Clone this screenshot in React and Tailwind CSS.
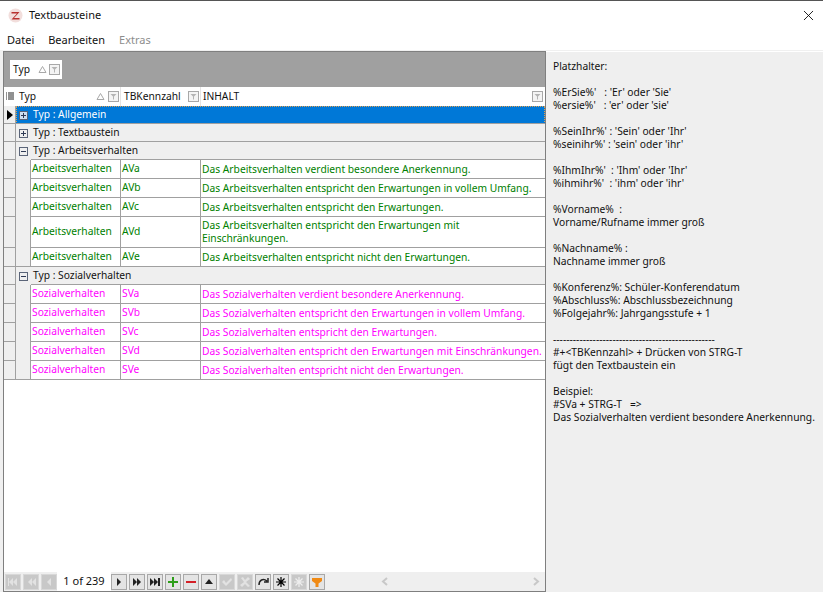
import React from 'react';
import { X } from 'lucide-react';

const arbeit = [
  ['Arbeitsverhalten', 'AVa', 'Das Arbeitsverhalten verdient besondere Anerkennung.'],
  ['Arbeitsverhalten', 'AVb', 'Das Arbeitsverhalten entspricht den Erwartungen in vollem Umfang.'],
  ['Arbeitsverhalten', 'AVc', 'Das Arbeitsverhalten entspricht den Erwartungen.'],
  ['Arbeitsverhalten', 'AVd', 'Das Arbeitsverhalten entspricht den Erwartungen mit Einschränkungen.', true],
  ['Arbeitsverhalten', 'AVe', 'Das Arbeitsverhalten entspricht nicht den Erwartungen.'],
];

const sozial = [
  ['Sozialverhalten', 'SVa', 'Das Sozialverhalten verdient besondere Anerkennung.'],
  ['Sozialverhalten', 'SVb', 'Das Sozialverhalten entspricht den Erwartungen in vollem Umfang.'],
  ['Sozialverhalten', 'SVc', 'Das Sozialverhalten entspricht den Erwartungen.'],
  ['Sozialverhalten', 'SVd', 'Das Sozialverhalten entspricht den Erwartungen mit Einschränkungen.'],
  ['Sozialverhalten', 'SVe', 'Das Sozialverhalten entspricht nicht den Erwartungen.'],
];

const help = [
  'Platzhalter:', '',
  "%ErSie%'   : 'Er' oder 'Sie'", "%ersie%'   : 'er' oder 'sie'", '',
  "%SeinIhr%' : 'Sein' oder 'Ihr'", "%seinihr%' : 'sein' oder 'ihr'", '',
  "%IhmIhr%'  : 'Ihm' oder 'Ihr'", "%ihmihr%'  : 'ihm' oder 'ihr'", '',
  '%Vorname%  :', 'Vorname/Rufname immer groß', '',
  '%Nachname% :', 'Nachname immer groß', '',
  '%Konferenz%: Schüler-Konferendatum', '%Abschluss%: Abschlussbezeichnung', '%Folgejahr%: Jahrgangsstufe + 1', '',
  '-------------------------------------------------',
  '#+<TBKennzahl> + Drücken von STRG-T', 'fügt den Textbaustein ein', '',
  'Beispiel:', '#SVa + STRG-T   =>', 'Das Sozialverhalten verdient besondere Anerkennung.',
];

const SortIcon = () => (
  <svg width="9" height="9" viewBox="0 0 9 9" className="shrink-0">
    <path d="M4.5 1.5 L8 7.5 H1 Z" fill="none" stroke="#a8a8a8" />
  </svg>
);

const FilterIcon = () => (
  <svg width="11" height="11" viewBox="0 0 11 11" className="shrink-0">
    <rect x="0.5" y="0.5" width="10" height="10" fill="#f4f4f4" stroke="#a8a8a8" />
    <path d="M2.5 3 H8.5 L6 5.5 V8.5 H5 V5.5 Z" fill="#b4b4b4" />
  </svg>
);

const ExpandBox = ({ open, selected }) => (
  <svg width="9" height="9" viewBox="0 0 9 9" className="shrink-0">
    <rect x="0.5" y="0.5" width="8" height="8" fill={selected ? '#cfe0f2' : 'none'} stroke="#5a6478" />
    <path d={open ? 'M2 4.5 H7' : 'M2 4.5 H7 M4.5 2 V7'} stroke="#2f3a55" />
  </svg>
);

const GroupRow = ({ label, open, selected, lineFrom }) => (
  <div className="flex h-[18px]">
    <div className="w-[12px] shrink-0 bg-[#efefef] border-r border-b border-[#a0a0a0] flex items-center justify-center">
      {selected && (
        <svg width="6" height="10" viewBox="0 0 6 10">
          <path d="M0 0 L6 5 L0 10 Z" fill="#000" />
        </svg>
      )}
    </div>
    <div
      className={`flex-1 relative flex items-center gap-[5px] pl-[3px] ${
        selected
          ? 'bg-[#0078d7] text-white outline-1 -outline-offset-1 outline-dotted outline-[#e0a050]'
          : 'bg-[#efefef] text-[#111]'
      }`}
    >
      <ExpandBox open={open} selected={selected} />
      <span>{label}</span>
      <div className={`absolute bottom-0 right-0 h-px bg-[#a0a0a0] ${lineFrom ? 'left-[15px]' : 'left-0'}`} />
    </div>
  </div>
);

const DataRow = ({ row, color, last }) => (
  <div className={`flex ${row[3] ? 'h-[31px]' : 'h-[19px]'}`}>
    <div className="w-[12px] shrink-0 bg-[#efefef] border-r border-b border-[#a0a0a0]" />
    <div className={`w-[15px] shrink-0 bg-[#efefef] border-r border-[#a0a0a0] ${last ? 'border-b' : ''}`} />
    <div className={`w-[90px] shrink-0 bg-white border-r border-b border-[#a0a0a0] pl-[1px] flex items-center ${color}`}>{row[0]}</div>
    <div className={`w-[80px] shrink-0 bg-white border-r border-b border-[#a0a0a0] pl-[1px] flex items-center ${color}`}>{row[1]}</div>
    <div className={`flex-1 bg-white border-b border-[#a0a0a0] pl-[1px] flex items-center leading-[13px] ${color}`}>
      {row[3] ? (
        <span>
          Das Arbeitsverhalten entspricht den Erwartungen mit
          <br />
          Einschränkungen.
        </span>
      ) : (
        row[2]
      )}
    </div>
  </div>
);

const NavButton = ({ d, fill = '#222', disabled, children }) => (
  <div
    className={`w-[16px] h-[16px] shrink-0 border flex items-center justify-center ${
      disabled ? 'border-[#d8d8d8] bg-[#c8c8c8]' : 'border-[#a8a8a8] bg-[#e4e4e4]'
    }`}
  >
    <svg width="12" height="12" viewBox="0 0 12 12">
      {children || <path d={d} fill={disabled ? '#e2e2e2' : fill} />}
    </svg>
  </div>
);

const App = () => {
  return (
    <div className='w-[823px] h-[592px] overflow-hidden bg-white flex flex-col text-[10.25px] text-[#111] font-["Noto_Sans",sans-serif]'>
      <div className="h-px bg-[#555] shrink-0" />

      {/* title bar */}
      <div className="h-[29px] shrink-0 flex items-center pl-[8px] pr-[6px]">
        <svg width="15" height="15" viewBox="0 0 15 15" className="shrink-0">
          <circle cx="7.5" cy="7.5" r="7" fill="#f2dedc" />
          <path d="M3.5 4 H11.5 L6 10 H11.5 V11.5 H3.5 L9 5.5 H3.5 Z" fill="#b8312f" />
        </svg>
        <span className="ml-[6px] text-[11px]">Textbausteine</span>
        <X size={17} strokeWidth={1.2} className="ml-auto text-black" />
      </div>

      {/* menu */}
      <div className="h-[20px] shrink-0 flex items-center gap-[14px] pl-[7px] text-[11px]">
        <span>Datei</span>
        <span>Bearbeiten</span>
        <span className="text-[#8d8d8d]">Extras</span>
      </div>

      <div className="flex-1 min-h-0 flex bg-[#f0f0f0] pt-px">
        {/* left grid */}
        <div className="w-[546px] shrink-0 pl-[3px] flex flex-col">
          <div className="flex-1 min-h-0 flex flex-col border border-[#7f7f7f] bg-white">
            <div className="h-[35px] shrink-0 bg-[#a0a0a0] flex items-center pl-[6px]">
              <div className="h-[19px] w-[52px] bg-white flex items-center pl-[3px] gap-[2px]">
                <span className="mr-[6px]">Typ</span>
                <SortIcon />
                <FilterIcon />
              </div>
            </div>

            <div className="h-[19px] shrink-0 flex bg-white">
              <div className="w-[12px] shrink-0 flex items-center justify-center">
                <svg width="8" height="9" viewBox="0 0 8 9">
                  <path d="M0 1 H1 M2 1 H8 M0 3 H1 M2 3 H8 M0 5 H1 M2 5 H8 M0 7 H1 M2 7 H8" stroke="#222" />
                </svg>
              </div>
              <div className="w-[105px] shrink-0 flex items-center pl-[3px] border-r border-[#e4e4e4] pr-[1px]">
                <span>Typ</span>
                <span className="ml-auto flex items-center gap-[3px]">
                  <SortIcon />
                  <FilterIcon />
                </span>
              </div>
              <div className="w-[80px] shrink-0 flex items-center pl-[3px] border-r border-[#e4e4e4] pr-[1px]">
                <span>TBKennzahl</span>
                <span className="ml-auto"><FilterIcon /></span>
              </div>
              <div className="flex-1 flex items-center pl-[2px] pr-[2px]">
                <span>INHALT</span>
                <span className="ml-auto"><FilterIcon /></span>
              </div>
            </div>

            <GroupRow label="Typ : Allgemein" selected />
            <GroupRow label="Typ : Textbaustein" />
            <GroupRow label="Typ : Arbeitsverhalten" open lineFrom />
            {arbeit.map((row, i) => (
              <DataRow key={row[1]} row={row} color="text-[#008000]" last={i === arbeit.length - 1} />
            ))}
            <GroupRow label="Typ : Sozialverhalten" open lineFrom />
            {sozial.map((row, i) => (
              <DataRow key={row[1]} row={row} color="text-[#ff00ff]" last={i === sozial.length - 1} />
            ))}

            <div className="flex-1" />

            {/* navigator */}
            <div className="h-[19px] shrink-0 flex items-center bg-[#efefef] pl-[1px] pr-[5px]">
              <div className="flex items-center gap-[2px]">
                <NavButton disabled d="M1 2 H2 V10 H1 Z M2 6 L6 2 V10 Z M6 6 L10 2 V10 Z" />
                <NavButton disabled d="M3 6 L7 2 V10 Z M7 6 L11 2 V10 Z" />
                <NavButton disabled d="M4 6 L8 2 V10 Z" />
              </div>
              <span className="bg-white h-[19px] w-[54px] shrink-0 flex items-center justify-center text-[11px]">1 of 239</span>
              <div className="flex items-center gap-[2px]">
                <NavButton d="M4 2 L8 6 L4 10 Z" />
                <NavButton d="M2 2 L6 6 L2 10 Z M6 2 L10 6 L6 10 Z" />
                <NavButton d="M1 2 L5 6 L1 10 Z M5 2 L9 6 L5 10 Z M9 2 H11 V10 H9 Z" />
                <NavButton d="M5 1 H7 V5 H11 V7 H7 V11 H5 V7 H1 V5 H5 Z" fill="#2e9e1a" />
                <NavButton d="M1 5 H11 V7 H1 Z" fill="#d42027" />
                <NavButton d="M6 3 L10 8 H2 Z" />
                <NavButton disabled d="M1 6 L3 4 L5 7 L10 2 L11 4 L5 10 Z" />
                <NavButton disabled d="M2 2 L4 1 L6 4 L9 1 L11 3 L7 6 L11 10 L9 11 L6 8 L3 11 L1 9 L5 6 Z" />
                <NavButton><path d="M2 9 C2 4 6 2 10 5 M7 6 H11 V2" fill="none" stroke="#222" strokeWidth="1.5" /></NavButton>
                <NavButton><path d="M6 1 V11 M1 6 H11 M2.5 2.5 L9.5 9.5 M9.5 2.5 L2.5 9.5" stroke="#000" strokeWidth="1.2" /></NavButton>
                <NavButton disabled><path d="M6 1 V11 M1 6 H11 M2.5 2.5 L9.5 9.5 M9.5 2.5 L2.5 9.5" stroke="#eee" strokeWidth="1.2" /></NavButton>
                <NavButton d="M1 2 H11 V5 L7.5 7.5 V11 H4.5 V7.5 L1 5 Z" fill="#f08a14" />
              </div>
              <div className="flex-1 flex items-center pl-[56px]">
                <svg width="8" height="9" viewBox="0 0 8 9">
                  <path d="M6 1 L2 4.5 L6 8" fill="none" stroke="#c8c8c8" strokeWidth="2" />
                </svg>
                <svg width="8" height="9" viewBox="0 0 8 9" className="ml-auto">
                  <path d="M2 1 L6 4.5 L2 8" fill="none" stroke="#c8c8c8" strokeWidth="2" />
                </svg>
              </div>
            </div>
          </div>
        </div>

        {/* placeholder help */}
        <div className="flex-1 border-t border-white pl-[7px] pt-[8px] bg-[#efefef] leading-[13px] whitespace-pre">
          {help.map((line, i) => (
            <div key={i} className="h-[13px]">{line}</div>
          ))}
        </div>
      </div>
    </div>
  );
};

export default App;
